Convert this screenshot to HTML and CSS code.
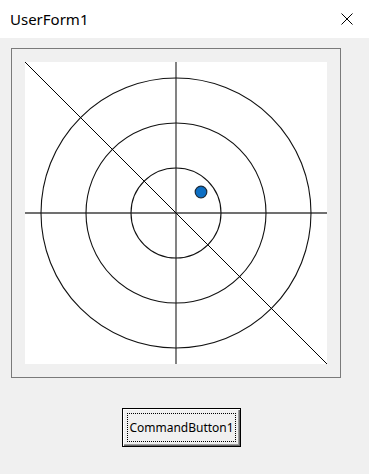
FILE: index.html
```html
<!DOCTYPE html>
<html>
<head>
<meta charset="utf-8">
<link rel="stylesheet" href="styles.css">
</head>
<body>
<div class="window">
  <div class="titlebar">
    <span class="title">UserForm1</span>
    <svg class="close" width="12" height="12" viewBox="0 0 12 12">
      <path d="M0.5 0.5 L11.5 11.5 M11.5 0.5 L0.5 11.5" stroke="#000" stroke-width="1" fill="none"/>
    </svg>
  </div>
  <div class="client">
    <div class="frame">
      <svg class="canvas" width="302" height="302" viewBox="0 0 302 302">
        <rect x="0" y="0" width="302" height="302" fill="#fff"/>
        <line x1="151" y1="0" x2="151" y2="302" stroke="#404040" stroke-width="1.3"/>
        <line x1="0" y1="151" x2="302" y2="151" stroke="#404040" stroke-width="1.3"/>
        <circle cx="151" cy="151" r="45" fill="none" stroke="#111" stroke-width="1.1"/>
        <circle cx="151" cy="151" r="90" fill="none" stroke="#111" stroke-width="1.1"/>
        <circle cx="151" cy="151" r="135" fill="none" stroke="#111" stroke-width="1.1"/>
        <line x1="0" y1="0" x2="302" y2="302" stroke="#000" stroke-width="1"/>
        <circle cx="176" cy="130" r="5.8" fill="#0d6fc4" stroke="#1a2a3a" stroke-width="1.2"/>
      </svg>
    </div>
    <div class="buttonrow">
      <button class="cmd"><span class="focus">CommandButton1</span></button>
    </div>
  </div>
</div>
</body>
</html>
```

FILE: styles.css
```css
html, body {
  margin: 0;
  padding: 0;
  width: 369px;
  height: 474px;
  overflow: hidden;
  background: #f0f0f0;
}
.window {
  width: 369px;
  height: 474px;
  display: flex;
  flex-direction: column;
}
.titlebar {
  height: 38px;
  background: #fff;
  display: flex;
  align-items: center;
  justify-content: space-between;
  padding: 0 16px 0 10px;
  box-sizing: border-box;
}
.title {
  font-family: "Noto Sans", "Open Sans", sans-serif;
  font-size: 15px;
  color: #000;
}
.close {
  display: block;
}
.client {
  flex: 1;
  background: #f0f0f0;
  padding: 10px 0 0 11px;
  display: flex;
  flex-direction: column;
}
.frame {
  width: 302px;
  height: 302px;
  padding: 13px;
  border: 1px solid #7a7a7a;
}
.canvas {
  display: block;
}
.buttonrow {
  padding-top: 30px;
  padding-left: 111px;
  display: flex;
}
.cmd {
  width: 119px;
  height: 39px;
  margin: 0;
  padding: 4px;
  box-sizing: border-box;
  background: #f0f0f0;
  border: 1px solid #000;
  box-shadow: inset 1px 1px 0 #fff, inset -1px -1px 0 #696969, inset -2px -2px 0 #a0a0a0;
  display: flex;
}
.focus {
  flex: 1;
  border: 1px dotted #000;
  display: flex;
  align-items: center;
  justify-content: center;
  font-family: "Noto Sans", "DejaVu Sans", sans-serif;
  font-size: 12px;
  color: #000;
}
```
